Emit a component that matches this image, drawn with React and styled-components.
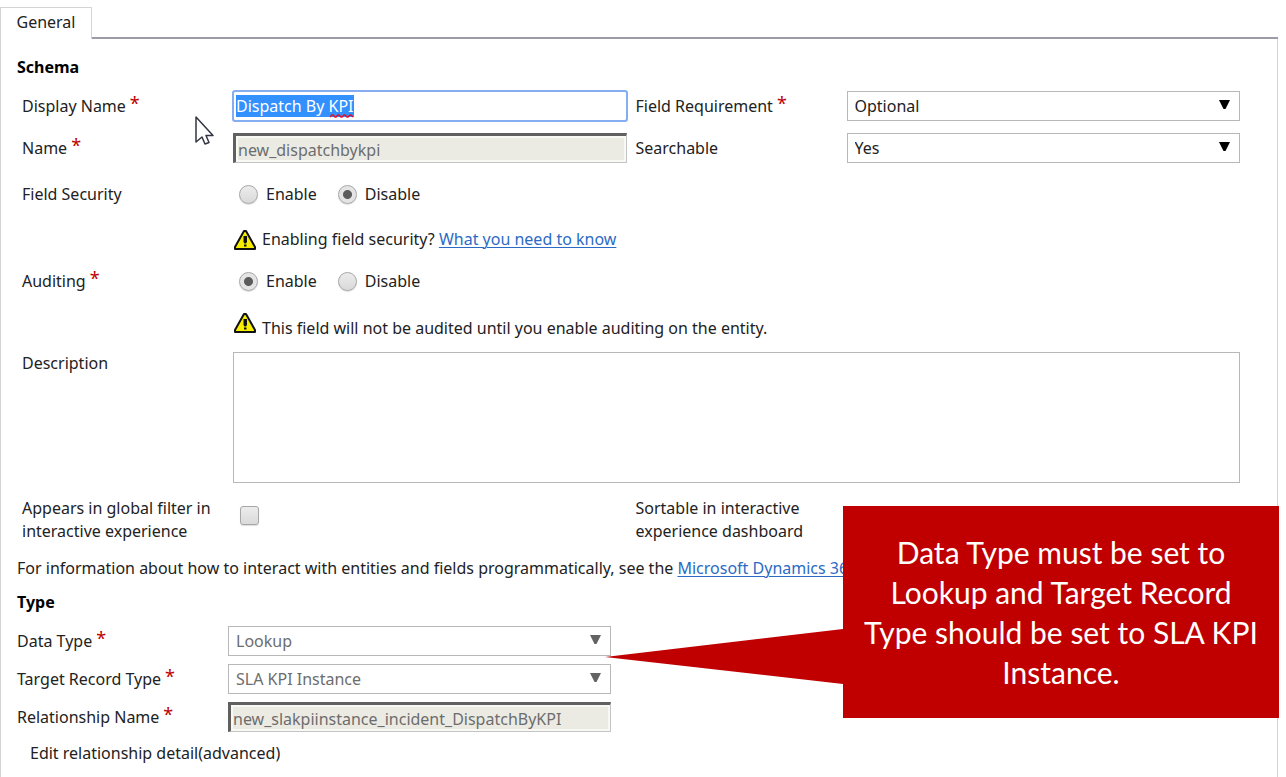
import React, { useEffect, useRef } from "react";
import styled, { createGlobalStyle } from "styled-components";

const GlobalStyle = createGlobalStyle`
  *, *::before, *::after { box-sizing: border-box; }
  html, body { margin: 0; background: #fff; }
  body {
    color: #222;
    font: 16px/23px "Noto Sans", "Open Sans", sans-serif;
  }
  input, select, textarea, button { font: inherit; color: inherit; margin: 0; }
`;

const Page = styled.main`
  position: relative;
  display: flex;
  flex-direction: column;
  min-height: 100vh;
  padding: 7px 8px 0 0;
  overflow: hidden;
`;

const TabBar = styled.div`
  display: flex;
  height: 32px;
`;

const Tab = styled.button`
  width: 92px;
  padding: 0 0 2px;
  border: 1px solid #d4d4d4;
  border-bottom: 0;
  background: #fff;
`;

const TabRule = styled.div`
  flex: 1;
  border-bottom: 2px solid #9c9ca8;
`;

const Panel = styled.form`
  flex: 1;
  padding: 16px 37px 11px 16px;
  border: solid #d4d4d4;
  border-width: 0 1px;
`;

const Heading = styled.h2`
  margin: 0 0 12px;
  color: #000;
  font-size: 16px;
  line-height: 24px;
  font-weight: 700;
`;

const Fields = styled.div`
  padding-left: 5px;
`;

const Row = styled.div`
  display: grid;
  grid-template-columns: 211px minmax(0, 1fr) 220px minmax(0, 1fr);
  align-items: ${(p) => p.$align || "center"};
  min-height: ${(p) => p.$height || 30}px;
  margin-bottom: ${(p) => p.$gap || 0}px;
`;

const TypeFields = styled.div`
  width: 594px;
  max-width: 100%;
`;

const TypeRow = styled.div`
  display: grid;
  grid-template-columns: 211px minmax(0, 1fr);
  align-items: center;
  margin-bottom: 8px;
`;

const Label = styled.label`
  padding-left: ${(p) => (p.$second ? 9 : 0)}px;
  white-space: ${(p) => (p.$wrap ? "normal" : "nowrap")};
`;

const Star = styled.span`
  display: inline-block;
  height: 18px;
  margin-left: 4px;
  color: #c00000;
  font-size: 18px;
  line-height: 16px;
  vertical-align: top;
`;

const Wide = styled.div`
  grid-column: 2 / -1;
  display: flex;
  align-items: center;
`;

const InputWrap = styled.div`
  position: relative;
  display: flex;
`;

const TextInput = styled.input`
  width: 100%;
  height: 30px;
  padding: 0 2px;
  border: 1px solid #c0c0c0;
  background: #fff;
  &:focus {
    outline: 2px solid #85adf0;
    outline-offset: -1px;
    border-radius: 2px;
  }
  &::selection { background: #3390ff; color: #fff; }
  &:disabled {
    padding: 2px 2px 0;
    border: 1px solid #c4c4c4;
    border-top: 3px solid #606060;
    border-left: 3px solid #606060;
    background: #ebebe4;
    box-shadow: inset 0 0 0 2px #f8f8f5;
    color: #6d6d6d;
  }
`;

const Squiggle = styled.svg`
  position: absolute;
  left: 97px;
  top: 23px;
`;

const SelectWrap = styled.div`
  position: relative;
  display: flex;
  color: ${(p) => (p.$muted ? "#636363" : "#000")};
`;

const SelectBox = styled.select`
  appearance: none;
  width: 100%;
  height: 30px;
  padding: 0 30px 0 7px;
  border: 1px solid #b8b8b8;
  border-radius: 0;
  background: #fff;
  color: #222;
  &:disabled { color: #6d6d6d; opacity: 1; }
`;

const Arrow = styled.svg`
  position: absolute;
  right: 10px;
  top: 8px;
  pointer-events: none;
`;

const Choice = styled.label`
  display: flex;
  align-items: center;
  gap: 8px;
  margin-right: 21px;
`;

const Radio = styled.input`
  appearance: none;
  width: 19px;
  height: 19px;
  border: 1px solid #a6a6a6;
  border-radius: 50%;
  background: linear-gradient(#ececec, #d9d9d9);
  box-shadow: 0 1px 1px #ddd;
  &:checked {
    background: radial-gradient(circle, #5c5c5c 4px, #e4e4e4 5px);
  }
`;

const Choices = styled(Wide)`
  padding-left: 6px;
`;

const Check = styled.input`
  appearance: none;
  width: 19px;
  height: 19px;
  margin: 9px 0 0 7px;
  border: 1px solid #a6a6a6;
  border-radius: 3px;
  background: linear-gradient(#ececec, #dadada);
  box-shadow: 0 1px 1px #ddd;
`;

const CheckCell = styled.div`
  align-self: start;
  display: flex;
`;

const Note = styled(Wide)`
  align-items: ${(p) => (p.$raised ? "flex-start" : "center")};
  gap: 6px;
  padding-left: 1px;
`;

const NoteText = styled.span`
  padding-top: ${(p) => (p.$raised ? 4 : 0)}px;
`;

const Link = styled.a`
  color: #2b6bc4;
  text-decoration: underline;
  text-decoration-thickness: 1px;
  text-underline-offset: 2px;
`;

const TextArea = styled.textarea`
  display: block;
  width: 100%;
  height: 131px;
  border: 1px solid #b8b8b8;
  resize: none;
`;

const Info = styled.p`
  margin: 13px 0 10px;
  line-height: 24px;
  white-space: nowrap;
`;

const PlainButton = styled.button`
  display: block;
  margin: 10px 0 0 13px;
  padding: 0;
  border: 0;
  background: none;
`;

const Callout = styled.aside`
  position: absolute;
  top: 506px;
  right: 7px;
  width: 436px;
  padding: 26px 16px;
  background: #c00000;
  color: #fff;
  font: 30px/40px Lato, "Open Sans", sans-serif;
  text-align: center;
`;

const Pointer = styled.svg`
  position: absolute;
  right: 100%;
  top: 123px;
`;

const Cursor = styled.svg`
  position: absolute;
  left: 194px;
  top: 115px;
`;

function Required() {
  return <Star aria-hidden="true">*</Star>;
}

function Dropdown({ id, value, disabled }) {
  return (
    <SelectWrap $muted={disabled}>
      <SelectBox id={id} defaultValue={value} disabled={disabled}>
        <option>{value}</option>
      </SelectBox>
      <Arrow width="11" height="11" viewBox="0 0 11 11" aria-hidden="true">
        <path d="M0 1h11L6.500 10h-2z" fill="currentColor" />
      </Arrow>
    </SelectWrap>
  );
}

function WarningIcon() {
  return (
    <svg width="22" height="20" viewBox="0 0 22 20" aria-hidden="true">
      <path d="M10 1h2l9 16v2H1v-2z" fill="#f7ee00" stroke="#111" strokeWidth="2" strokeLinejoin="round" />
      <path d="M9.500 6h3.500v6l-1 1.500h-1.500l-1-1.500zM10 14.500h2.500v2H10z" fill="#111" />
    </svg>
  );
}

function EnableDisable({ name, value, label }) {
  return (
    <Choices role="radiogroup" aria-label={label}>
      {["Enable", "Disable"].map((option) => (
        <Choice key={option}>
          <Radio type="radio" name={name} defaultChecked={value === option} />
          {option}
        </Choice>
      ))}
    </Choices>
  );
}

export default function App() {
  const displayName = useRef(null);

  useEffect(() => {
    displayName.current.focus();
    displayName.current.select();
  }, []);

  return (
    <>
      <GlobalStyle />
      <Page>
        <TabBar>
          <Tab type="button">General</Tab>
          <TabRule />
        </TabBar>
        <Panel>
          <Heading>Schema</Heading>
          <Fields>
            <Row $gap={12}>
              <Label htmlFor="display">Display Name<Required /></Label>
              <InputWrap>
                <TextInput id="display" ref={displayName} defaultValue="Dispatch By KPI" spellCheck={false} />
                <Squiggle width="24" height="4" viewBox="0 0 24 4" aria-hidden="true">
                  <path d="M0 3l2-2h1l2 2h1l2-2h1l2 2h1l2-2h1l2 2h1l2-2h1l2 2" fill="none" stroke="#e0102a" strokeWidth="1.500" />
                </Squiggle>
              </InputWrap>
              <Label $second htmlFor="requirement">Field Requirement<Required /></Label>
              <Dropdown id="requirement" value="Optional" />
            </Row>
            <Row $gap={9}>
              <Label htmlFor="name">Name<Required /></Label>
              <TextInput id="name" defaultValue="new_dispatchbykpi" disabled />
              <Label $second htmlFor="searchable">Searchable</Label>
              <Dropdown id="searchable" value="Yes" />
            </Row>
            <Row $height={45}>
              <span>Field Security</span>
              <EnableDisable name="security" label="Field Security" value="Disable" />
            </Row>
            <Row $height={45}>
              <Note>
                <WarningIcon />
                <NoteText>Enabling field security? <Link href="#security">What you need to know</Link></NoteText>
              </Note>
            </Row>
            <Row $height={38}>
              <span>Auditing<Required /></span>
              <EnableDisable name="auditing" label="Auditing" value="Enable" />
            </Row>
            <Row $height={52}>
              <Note $raised>
                <WarningIcon />
                <NoteText $raised>This field will not be audited until you enable auditing on the entity.</NoteText>
              </Note>
            </Row>
            <Row $align="start" $gap={14}>
              <Label htmlFor="description">Description</Label>
              <Wide as={TextArea} id="description" />
            </Row>
            <Row>
              <Label $wrap htmlFor="filter">Appears in global filter in interactive experience</Label>
              <CheckCell><Check id="filter" type="checkbox" /></CheckCell>
              <Label $wrap $second htmlFor="sortable">Sortable in interactive<br />experience dashboard</Label>
              <CheckCell><Check id="sortable" type="checkbox" /></CheckCell>
            </Row>
          </Fields>
          <Info>
            For information about how to interact with entities and fields programmatically, see the{" "}
            <Link href="#sdk">Microsoft Dynamics 365</Link>
          </Info>
          <Heading>Type</Heading>
          <TypeFields>
            <TypeRow>
              <Label htmlFor="datatype">Data Type<Required /></Label>
              <Dropdown id="datatype" value="Lookup" disabled />
            </TypeRow>
            <TypeRow>
              <Label htmlFor="target">Target Record Type<Required /></Label>
              <Dropdown id="target" value="SLA KPI Instance" disabled />
            </TypeRow>
            <TypeRow>
              <Label htmlFor="relationship">Relationship Name<Required /></Label>
              <TextInput id="relationship" defaultValue="new_slakpiinstance_incident_DispatchByKPI" disabled />
            </TypeRow>
          </TypeFields>
          <PlainButton type="button">Edit relationship detail(advanced)</PlainButton>
        </Panel>
        <Callout>
          <Pointer width="238" height="55" viewBox="0 0 238 55" aria-hidden="true">
            <path d="M238 0v55L0 28z" fill="#c00000" />
          </Pointer>
          Data Type must be set to Lookup and Target Record Type should be set to SLA KPI Instance.
        </Callout>
        <Cursor width="22" height="32" viewBox="0 0 22 32" aria-hidden="true">
          <path d="M2 2v25l6-5 3 7 4-1.500-3-7h7z" fill="#fff" stroke="#333640" strokeWidth="1.500" strokeLinejoin="round" />
        </Cursor>
      </Page>
    </>
  );
}
